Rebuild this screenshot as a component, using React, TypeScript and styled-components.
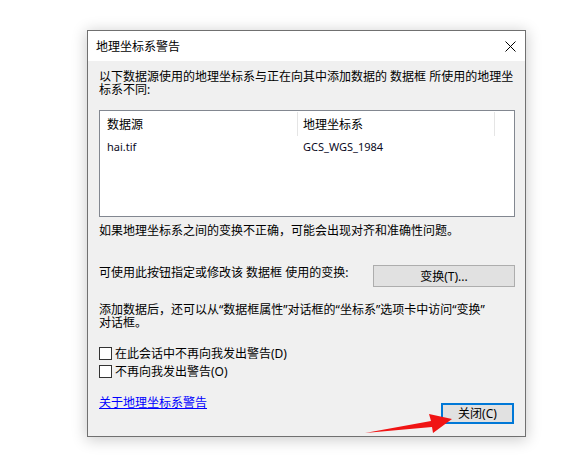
import React from "react";
import styled, { createGlobalStyle } from "styled-components";

const Global = createGlobalStyle`
  html, body { margin: 0; padding: 0; background: #ffffff; }
  body {
    font-family: "Noto Sans", "Noto Sans CJK SC", sans-serif;
    font-size: 12px;
    color: #000000;
  }
  * { box-sizing: border-box; }
`;

const Page = styled.div`
  position: relative;
  width: 576px;
  height: 465px;
  padding: 30px 0 0 87px;
  overflow: hidden;
`;

const Dialog = styled.div`
  width: 439px;
  height: 407px;
  border: 1px solid #707070;
  background: #f0f0f0;
  box-shadow: 0 2px 14px 1px rgba(0, 0, 0, 0.2);
  display: flex;
  flex-direction: column;
`;

const TitleBar = styled.div`
  height: 30px;
  flex: none;
  background: #ffffff;
  display: flex;
  align-items: center;
  justify-content: space-between;
  padding: 0 9px 0 8px;
  line-height: 13px;
`;

const CloseX = styled.svg`
  width: 11px;
  height: 11px;
  display: block;
`;

const Body = styled.div`
  flex: 1;
  display: flex;
  flex-direction: column;
  padding: 9px 10px 0 11px;
`;

const Para = styled.div<{ $mt?: number }>`
  margin-top: ${(p) => p.$mt ?? 0}px;
  line-height: 13px;
  white-space: nowrap;
`;

const ListBox = styled.div`
  margin-top: 14px;
  height: 107px;
  border: 1px solid #828790;
  background: #ffffff;
`;

const Grid = styled.div<{ $h: number }>`
  display: grid;
  grid-template-columns: 198px 197px 1fr;
  height: ${(p) => p.$h}px;
`;

const HeaderCell = styled.div<{ $pl: number; $sep: boolean }>`
  margin: 1px 0;
  padding-left: ${(p) => p.$pl}px;
  display: flex;
  align-items: center;
  border-right: ${(p) => (p.$sep ? "1px solid #e5e5e5" : "none")};
`;

const Cell = styled.div<{ $pl: number }>`
  padding-left: ${(p) => p.$pl}px;
  display: flex;
  align-items: center;
  white-space: nowrap;
  font-size: 11px;
  color: #0a0a1e;
`;

const ActionRow = styled.div`
  margin-top: 28px;
  display: flex;
  justify-content: space-between;
  align-items: flex-start;
`;

const ActionLabel = styled.div`
  padding-top: 1px;
  line-height: 13px;
  white-space: nowrap;
`;

const Button = styled.button<{ $w: number; $h: number; $default?: boolean }>`
  width: ${(p) => p.$w}px;
  height: ${(p) => p.$h}px;
  margin: 0;
  padding: 0;
  font: inherit;
  color: #000000;
  background: #e1e1e1;
  border: ${(p) => (p.$default ? "2px solid #0078d7" : "1px solid #adadad")};
  display: flex;
  align-items: center;
  justify-content: center;
  line-height: 13px;
`;

const Checks = styled.div`
  margin-top: 15px;
  display: flex;
  flex-direction: column;
`;

const CheckRow = styled.label`
  height: 18px;
  display: flex;
  align-items: center;
  gap: 3px;
  white-space: nowrap;
`;

const Box = styled.span`
  width: 13px;
  height: 13px;
  border: 1px solid #333333;
  background: #ffffff;
  flex: none;
`;

const Footer = styled.div`
  margin-top: 16px;
  display: flex;
  justify-content: space-between;
  align-items: flex-start;
  padding-right: 1px;
`;

const Link = styled.a`
  line-height: 13px;
  color: #0000ff;
  text-decoration: underline;
  cursor: pointer;
`;

const CloseWrap = styled.div`
  margin-top: 7px;
`;

const Arrow = styled.svg`
  position: absolute;
  left: 0;
  top: 0;
  width: 576px;
  height: 465px;
  pointer-events: none;
`;

export default function App() {
  return (
    <>
      <Global />
      <Page>
        <Dialog>
          <TitleBar>
            <span>地理坐标系警告</span>
            <CloseX viewBox="0 0 11 11">
              <path d="M0.5 0.5 L10.5 10.5 M10.5 0.5 L0.5 10.5" stroke="#000" strokeWidth="1" fill="none" />
            </CloseX>
          </TitleBar>
          <Body>
            <Para>
              以下数据源使用的地理坐标系与正在向其中添加数据的 数据框 所使用的地理坐
              <br />
              标系不同:
            </Para>
            <ListBox>
              <Grid $h={26}>
                <HeaderCell $pl={7} $sep>数据源</HeaderCell>
                <HeaderCell $pl={5} $sep>地理坐标系</HeaderCell>
                <HeaderCell $pl={0} $sep={false} />
              </Grid>
              <Grid $h={18}>
                <Cell $pl={7}>hai.tif</Cell>
                <Cell $pl={5}>GCS_WGS_1984</Cell>
                <Cell $pl={0} />
              </Grid>
            </ListBox>
            <Para $mt={7}>如果地理坐标系之间的变换不正确，可能会出现对齐和准确性问题。</Para>
            <ActionRow>
              <ActionLabel>可使用此按钮指定或修改该 数据框 使用的变换:</ActionLabel>
              <Button $w={142} $h={22}>变换(T)...</Button>
            </ActionRow>
            <Para $mt={16}>
              添加数据后，还可以从“数据框属性”对话框的“坐标系”选项卡中访问“变换”
              <br />
              对话框。
            </Para>
            <Checks>
              <CheckRow>
                <Box />
                在此会话中不再向我发出警告(D)
              </CheckRow>
              <CheckRow>
                <Box />
                不再向我发出警告(O)
              </CheckRow>
            </Checks>
            <Footer>
              <Link>关于地理坐标系警告</Link>
              <CloseWrap>
                <Button $w={73} $h={21} $default>
                  关闭(C)
                </Button>
              </CloseWrap>
            </Footer>
          </Body>
        </Dialog>
        <Arrow viewBox="0 0 576 465">
          <polygon
            points="365,433 431,421 429,414 452,419 433,433 432,427"
            fill="#f01414"
          />
        </Arrow>
      </Page>
    </>
  );
}
